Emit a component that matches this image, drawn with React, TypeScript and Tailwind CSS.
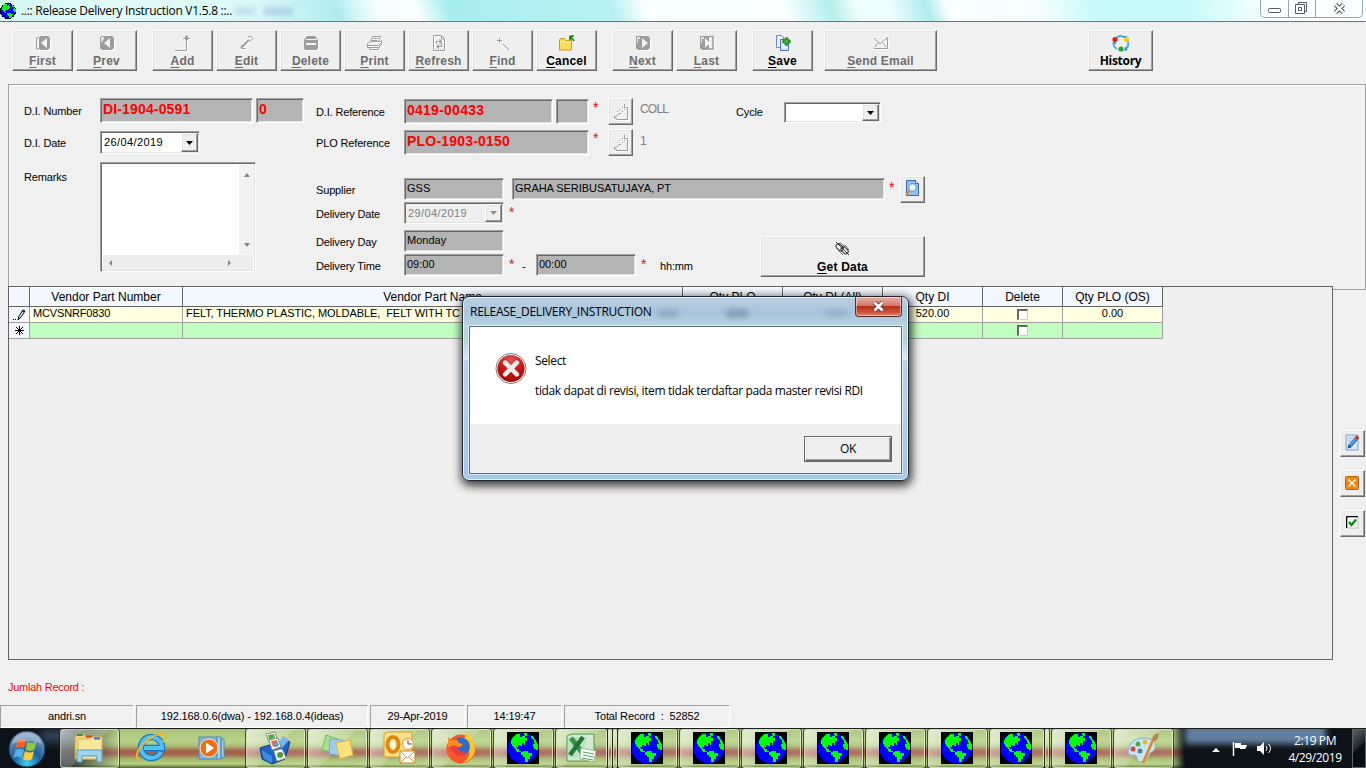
import React from "react";

type Kids = { children?: React.ReactNode };

const BEVEL =
  "border border-t-white border-l-white border-r-[#696969] border-b-[#696969] shadow-[inset_-1px_-1px_0_#a0a0a0,inset_1px_1px_0_#e3e3e3] bg-[#efefef]";
const SUNKEN =
  "border border-t-[#a0a0a0] border-l-[#a0a0a0] border-r-white border-b-white shadow-[inset_1px_1px_0_#696969,inset_-1px_-1px_0_#e3e3e3]";

function Globe({ size, square }: { size: number; square?: boolean }) {
  return (
    <svg width={size} height={size} viewBox="0 0 32 32" shapeRendering="crispEdges" className="shrink-0">
      {square && <rect width="32" height="32" fill="#000" />}
      {!square && <circle cx="16" cy="16" r="16" fill="#000" />}
      <circle cx="16" cy="16" r={square ? 15.3 : 14} fill="#0000ff" />
      <g fill="#00ff00">
        <path d="M4 9L6 5L10 2H13V5H15V4H18V6H20V9H18V13H17V11H15V14H13V13H11V15H9L10 17H12V19H14V20H10L8 16L5 14Z" />
        <path d="M17 1H20V4H18V3H17Z" />
        <path d="M14 20H16V19H21V21H25V24H23V27H21V30H18V25H16V23H14Z" />
        <path d="M24 4H26L29 9H27L25 7Z" />
        <path d="M27 9H29L31 13V18H29V17H27V15H26V12H28V11H27Z" />
      </g>
    </svg>
  );
}

const EMBOSS = "[filter:drop-shadow(1px_1px_0_#fff)]";

function ToolIcon({ name }: { name: string }) {
  switch (name) {
    case "First":
      return (
        <svg width="16" height="16" viewBox="0 0 16 16" className={EMBOSS}>
          <path d="M1.500 3v11h3V2.500z" fill="#f3f3f3" stroke="#9c9c9c" />
          <path d="M5 1h8l2 2v10l-2 2H5z" fill="#9c9c9c" />
          <path d="M12 3v10L6 8z" fill="#f3f3f3" />
        </svg>
      );
    case "Prev":
      return (
        <svg width="16" height="16" viewBox="0 0 16 16" className={EMBOSS}>
          <path d="M2 1h11l2 2v10l-2 2H3l-2-2V3z" fill="#9c9c9c" />
          <path d="M11 3v10L5 8z" fill="#f3f3f3" />
          <path d="M2 2h3v2L2 8z" fill="#e8e8e8" />
        </svg>
      );
    case "Next":
      return (
        <svg width="16" height="16" viewBox="0 0 16 16" className={EMBOSS}>
          <path d="M1 1h12l2 2v10l-2 2H3l-2-2z" fill="#9c9c9c" />
          <path d="M7 3v10l6-5z" fill="#f3f3f3" />
          <path d="M2 2h3v2H3v4H2z" fill="#e4e4e4" />
        </svg>
      );
    case "Last":
      return (
        <svg width="16" height="16" viewBox="0 0 16 16" className={EMBOSS}>
          <path d="M1 1h9v14H3l-2-2z" fill="#9c9c9c" />
          <path d="M6 3v10l5-5z" fill="#f3f3f3" />
          <path d="M10 1.500h4v12.500H10" fill="none" stroke="#9c9c9c" strokeWidth="1.500" />
          <path d="M2 2h3v2H3v4H2z" fill="#e4e4e4" />
        </svg>
      );
    case "Add":
      return (
        <svg width="16" height="16" viewBox="0 0 16 16" className={EMBOSS}>
          <path d="M0 15.500h11.500V6M10.500 1.500h2v3h-2zM8 3.500h7" fill="none" stroke="#9c9c9c" />
          <path d="M11.500 0v6" stroke="#9c9c9c" />
        </svg>
      );
    case "Edit":
      return (
        <svg width="16" height="16" viewBox="0 0 16 16" className={EMBOSS}>
          <path d="M2 13l8-8" fill="none" stroke="#9c9c9c" strokeWidth="1.800" />
          <path d="M9 1.500h3l2 2-3 3M2.500 10v3.500h4" fill="none" stroke="#9c9c9c" />
        </svg>
      );
    case "Delete":
      return (
        <svg width="16" height="16" viewBox="0 0 16 16" className={EMBOSS}>
          <path d="M4 1h8l3 4v8l-1 2H2l-1-2V5z" fill="#9c9c9c" />
          <path d="M3 4.500h11" stroke="#f3f3f3" strokeWidth="1" />
          <path d="M3 9h10" stroke="#f3f3f3" strokeWidth="2" />
        </svg>
      );
    case "Print":
      return (
        <svg width="17" height="16" viewBox="0 0 17 16" className={EMBOSS} fill="none" stroke="#9c9c9c">
          <path d="M4.500 6.500l2-5h8l-2 5M7 3.500h5M6 5.500h5" />
          <path d="M1.500 8.500l3-2h9l2-1v4l-3 3h-11zM1.500 10.500h11l3-3M3 12.500l1 2h8l2-3" />
        </svg>
      );
    case "Refresh":
      return (
        <svg width="16" height="16" viewBox="0 0 16 16" className={EMBOSS} fill="none" stroke="#9c9c9c">
          <path d="M2.500 .5h8l3 3v12h-11zM10.500 1v3h3" />
          <path d="M5.500 9V6.500h4M8.500 4.500l2 2-2 2M10.500 8v3.500H7M8 9.500l-2 2 2 2" strokeWidth="1.200" />
        </svg>
      );
    case "Find":
      return (
        <svg width="16" height="16" viewBox="0 0 16 16" className={EMBOSS} fill="none" stroke="#9c9c9c">
          <path d="M4.500 3v5M2 5.500h5M8 9l6 6" />
        </svg>
      );
    case "Cancel":
      return (
        <svg width="17" height="16" viewBox="0 0 17 16">
          <path d="M1.500 5l1-1.500h4l1 2h6v9.500h-12z" fill="#ffdc58" stroke="#c79a18" />
          <path d="M2 7h11" stroke="#fff3a8" />
          <path d="M12 1h4M12 1v4M12 1l4 5" stroke="#0a8a12" strokeWidth="1.700" />
        </svg>
      );
    case "Save":
      return (
        <svg width="16" height="16" viewBox="0 0 16 16">
          <path d="M1.500 .5h5l2 2v10h-7z" fill="#e9f3ff" stroke="#6c84c8" />
          <path d="M5.500 4.500h8v11h-8z" fill="#cfe5ff" stroke="#5472bc" />
          <path d="M7 10h5M7 12.500h5" stroke="#fff" />
          <path d="M11.500 2.500v8M7.500 6.500h8" stroke="#187818" strokeWidth="3.600" />
          <path d="M11.500 3.500v6M8.500 6.500h6" stroke="#49b23e" strokeWidth="2" />
        </svg>
      );
    case "Send Email":
      return (
        <svg width="16" height="16" viewBox="0 0 16 16" className={EMBOSS} fill="none" stroke="#9c9c9c">
          <path d="M1 3l6 6 7.500-6.500v11H1M2 12l3-4M10 8l3 4" />
        </svg>
      );
    default:
      return (
        <svg width="18" height="17" viewBox="0 0 18 17" fill="none">
          <path d="M4 3Q9-1 13 3M15.500 6Q18 11 13 14M5 14Q1 12 1.500 7" stroke="#4ba9e4" strokeWidth="1.800" />
          <path d="M11 1h4v3zM1 9h4l-3-3zM12 16l1-4 3 3z" fill="#3293d8" />
          <circle cx="3" cy="4.500" r="2.600" fill="#ec1c14" />
          <circle cx="14.500" cy="4.500" r="2.600" fill="#f4d10c" />
          <circle cx="9" cy="14" r="2.600" fill="#35a12b" />
        </svg>
      );
  }
}

function ToolButton({ label, on, className = "w-[61px]" }: { label: string; on?: boolean; className?: string }) {
  return (
    <button
      className={`flex h-[41px] shrink-0 flex-col items-center ${BEVEL} ${className} ${on ? "text-black" : "text-[#6d6d6d]"}`}
    >
      <span className="mt-[4px] flex h-[17px] items-start">
        <ToolIcon name={label} />
      </span>
      <span className="mt-[2px] text-[12px] font-bold leading-[14px] tracking-[0.2px]">
        {label === "History" ? (
          <span className="font-['Open_Sans'] tracking-[-0.3px]">{label}</span>
        ) : (
          <>
            <span className="underline underline-offset-2">{label[0]}</span>
            {label.slice(1)}
          </>
        )}
      </span>
    </button>
  );
}

function Field({ className = "", children }: Kids & { className?: string }) {
  return <div className={`shrink-0 overflow-hidden whitespace-pre bg-[#b4b4b4] pl-[2px] ${SUNKEN} ${className}`}>{children}</div>;
}

function Combo({ value, className = "", off }: { value: string; className?: string; off?: boolean }) {
  return (
    <div className={`flex shrink-0 p-px ${SUNKEN} ${off ? "bg-[#efefef] text-[#808080]" : "bg-white"} ${className}`}>
      <span className="flex-1 pl-[2px] leading-[19px] tracking-[0.4px]">{value}</span>
      <span className={`flex w-[17px] items-center justify-center ${BEVEL}`}>
        <svg width="7" height="4" viewBox="0 0 7 4">
          <path d="M0 0h7L3.500 4z" fill={off ? "#909090" : "#000"} />
        </svg>
      </span>
    </div>
  );
}

function Star({ className = "" }: { className?: string }) {
  return (
    <span className={`w-[6px] shrink-0 text-[14px] leading-[16px] text-[#ff0000] ${className}`}>*</span>
  );
}

function LookupOff() {
  return (
    <div className={`flex h-[27px] w-[25px] shrink-0 items-center justify-center ${BEVEL}`}>
      <svg width="16" height="18" viewBox="0 0 16 18" fill="none" stroke="#9c9c9c" className={EMBOSS}>
        <path d="M11.500 1v3.500h3v12h-11M1 15l5-4M1 13l1 2 2 1M6 10.500h2" />
        <path d="M9 4.500h1M6 6.500h1M4 8.500h1M9 8.500h1M11 6.500h1" />
      </svg>
    </div>
  );
}

function Label({ children, className = "" }: Kids & { className?: string }) {
  return <span className={`shrink-0 whitespace-nowrap leading-[14px] tracking-[-0.15px] ${className}`}>{children}</span>;
}

function FormPanel() {
  return (
    <section className="ml-2 flex h-[206px] shrink-0 border border-r-[#a0a0a0] border-[#a0a0a0] shadow-[inset_1px_1px_0_#fff]">
      <div className="flex w-[307px] shrink-0 flex-col pl-[15px] pt-[13px]">
        <div className="flex h-[33px]">
          <Label className="w-[76px] pt-[6px]">D.I. Number</Label>
          <Field className="h-[25px] w-[153px] text-[14px] font-bold leading-[21px] tracking-[0.15px] text-[#ff0000]">DI-1904-0591</Field>
          <Field className="ml-[3px] h-[25px] w-[48px] text-[14px] font-bold leading-[21px] text-[#ff0000]">0</Field>
        </div>
        <div className="flex h-[31px]">
          <Label className="w-[76px] pt-[5px]">D.I. Date</Label>
          <Combo value="26/04/2019" className="h-[23px] w-[100px]" />
        </div>
        <div className="flex">
          <Label className="w-[76px] pt-[8px]">Remarks</Label>
          <div className={`flex h-[110px] w-[156px] flex-col bg-white p-px ${SUNKEN}`}>
            <div className="flex h-[91px]">
              <div className="flex-1" />
              <div className="mt-px flex w-[15px] flex-col items-center justify-between bg-[#f2f2f2] py-[7px]">
                <svg width="8" height="5"><path d="M1 5h6L4 1z" fill="#858585" /></svg>
                <svg width="8" height="5"><path d="M1 0h6L4 4z" fill="#858585" /></svg>
              </div>
            </div>
            <div className="mx-px flex flex-1 items-center justify-between bg-[#ededed] pl-[5px] pr-[21px]">
              <svg width="5" height="8"><path d="M4 1v6L1 4z" fill="#858585" /></svg>
              <svg width="5" height="8"><path d="M1 1v6l3-3z" fill="#858585" /></svg>
            </div>
          </div>
        </div>
      </div>

      <div className="flex flex-1 flex-col pt-[13px]">
        <div className="flex h-[31px]">
          <Label className="w-[88px] pt-[7px]">D.I. Reference</Label>
          <Field className="mt-px h-[25px] w-[149px] text-[14px] font-bold leading-[21px] tracking-[0.25px] text-[#ff0000]">0419-00433</Field>
          <Field className="ml-[3px] mt-px h-[25px] w-[33px]" />
          <Star className="ml-[4px] mt-px" />
          <div className="ml-[9px]"><LookupOff /></div>
          <span className="ml-[7px] w-[96px] pt-[3px] text-[12px] leading-[16px] tracking-[-0.8px] text-[#808080]">COLL</span>
          <Label className="w-[48px] pt-[7px]">Cycle</Label>
          <Combo value="" className="mt-[4px] h-[21px] w-[97px]" />
        </div>
        <div className="flex h-[47px]">
          <Label className="w-[88px] pt-[7px]">PLO Reference</Label>
          <Field className="mt-px h-[25px] w-[185px] text-[14px] font-bold leading-[21px] tracking-[0.2px] text-[#ff0000]">PLO-1903-0150</Field>
          <Star className="ml-[4px] mt-px" />
          <div className="ml-[9px]"><LookupOff /></div>
          <span className="ml-[7px] pt-[4px] text-[12px] leading-[16px] text-[#808080]">1</span>
        </div>
        <div className="flex h-[26px]">
          <Label className="w-[88px] pt-[7px]">Supplier</Label>
          <Field className="mt-[2px] h-[22px] w-[100px] leading-[18px]">GSS</Field>
          <Field className="ml-[8px] mt-[2px] h-[22px] w-[373px] leading-[18px] tracking-[-0.05px]">GRAHA SERIBUSATUJAYA, PT</Field>
          <Star className="ml-[4px] mt-[3px]" />
          <div className={`ml-[5px] flex h-[27px] w-[25px] shrink-0 items-center justify-center ${BEVEL}`}>
            <svg width="15" height="17" viewBox="0 0 15 17" className="-mt-[2px]">
              <path d="M1.500 .5h9l3 3v12h-12z" fill="#8fc3f4" stroke="#3568b8" />
              <path d="M10.500 .5v3h3" fill="#fff" stroke="#3568b8" />
              <circle cx="7.500" cy="7.500" r="3.800" fill="#e6f4ff" stroke="#8094b4" strokeWidth="1.200" />
              <path d="M4.500 10.500L1 15" stroke="#e18a2c" strokeWidth="2" />
            </svg>
          </div>
        </div>
        <div className="flex h-[28px]">
          <Label className="w-[88px] pt-[5px]">Delivery Date</Label>
          <Combo value="29/04/2019" off className="h-[22px] w-[100px]" />
          <Star className="ml-[5px] mt-[2px]" />
        </div>
        <div className="flex">
          <div className="flex w-[444px] flex-col">
            <div className="flex h-[24px]">
              <Label className="w-[88px] pt-[5px]">Delivery Day</Label>
              <Field className="h-[22px] w-[100px] leading-[18px]">Monday</Field>
            </div>
            <div className="flex h-[24px]">
              <Label className="w-[88px] pt-[5px]">Delivery Time</Label>
              <Field className="h-[22px] w-[100px] leading-[18px]">09:00</Field>
              <Star className="ml-[5px] mt-[2px]" />
              <span className="ml-[7px] w-[14px] pt-[5px] leading-[14px]">-</span>
              <Field className="h-[22px] w-[100px] leading-[18px]">00:00</Field>
              <Star className="ml-[5px] mt-[2px]" />
              <Label className="ml-[13px] pt-[5px]">hh:mm</Label>
            </div>
          </div>
          <button className={`mt-[6px] flex h-[41px] w-[165px] flex-col items-center ${BEVEL}`}>
            <svg width="16" height="16" viewBox="0 0 16 16" className="mt-[4px]" fill="none" stroke="#333">
              <path d="M1 1l13 13" />
              <rect x="1" y="4" width="8" height="5" rx="2.500" transform="rotate(45 5 6)" />
              <rect x="6" y="7" width="8" height="5" rx="2.500" transform="rotate(45 10 9)" />
              <path d="M5 1.500l6 5M10 4l4 5M3 9l5 5" stroke="#777" />
            </svg>
            <span className="mt-[3px] text-[12px] font-bold leading-[14px] tracking-[0.2px]">
              <span className="underline underline-offset-2">G</span>et Data
            </span>
          </button>
        </div>
      </div>
    </section>
  );
}

const COLS = "grid grid-cols-[21px_153px_500px_100px_100px_100px_80px_100px] w-[1154px]";
const HEADS = ["", "Vendor Part Number", "Vendor Part Name", "Qty PLO", "Qty DI (All)", "Qty DI", "Delete", "Qty PLO (OS)"];

function Check() {
  return <span className="block h-[11px] w-[11px] border-2 border-b border-r border-[#6a6a6a] border-b-[#ccc] border-r-[#ccc] bg-white" />;
}

function DataGrid() {
  const cell = "flex items-center justify-center whitespace-pre border-b border-r border-[#a0a0a0] leading-[13px]";
  return (
    <section className="-mt-[4px] ml-2 h-[374px] w-[1325px] shrink-0 border border-[#646464] bg-[#efefef]">
      <div className={`${COLS} h-[20px] text-[12px]`}>
        {HEADS.map((h, i) => (
          <div key={i} className="flex items-center justify-center border-b border-r border-[#646464] bg-[#f3f7fe] shadow-[inset_1px_1px_0_#fff]">{h}</div>
        ))}
      </div>
      <div className={`${COLS} h-[16px]`}>
        <div className={`${cell} border-[#646464] bg-[#f3f7fe]`}>
          <svg width="13" height="12" viewBox="0 0 13 12" fill="none" stroke="#000"><path d="M0 10.500h1M2 10.500h1M5 11l1-4 4-6 2 1-4 6zM9 2l2 1" /></svg>
        </div>
        <div className={`${cell} justify-start bg-[#ffffe1] pb-[2px] pl-[3px] tracking-[-0.15px]`}>MCVSNRF0830</div>
        <div className={`${cell} justify-start bg-[#ffffe1] pb-[2px] pl-[3px] tracking-[-0.07px]`}>FELT, THERMO PLASTIC, MOLDABLE,  FELT WITH TC</div>
        <div className={`${cell} bg-[#ffffe1]`} />
        <div className={`${cell} bg-[#ffffe1]`} />
        <div className={`${cell} bg-[#ffffe1] pb-[2px]`}>520.00</div>
        <div className={`${cell} bg-[#ffffe1]`}><Check /></div>
        <div className={`${cell} bg-[#ffffe1] pb-[2px]`}>0.00</div>
      </div>
      <div className={`${COLS} h-[16px]`}>
        <div className={`${cell} border-[#646464] bg-[#f3f7fe]`}>
          <svg width="9" height="9" viewBox="0 0 9 9" stroke="#000"><path d="M4.500 0v9M0 4.500h9M1 1l7 7M8 1L1 8" /></svg>
        </div>
        {[0, 1, 2, 3, 4, 5, 6].map((i) => (
          <div key={i} className={`${cell} bg-[#c0ffc0]`}>{i === 5 && <Check />}</div>
        ))}
      </div>
    </section>
  );
}

function SideTools() {
  const b = `flex h-[27px] w-[25px] items-center justify-center ${BEVEL}`;
  return (
    <div className="ml-[7px] mt-[140px] flex flex-col gap-[13px]">
      <div className={b}>
        <svg width="15" height="17" viewBox="0 0 15 17" className="-mt-[2px]">
          <path d="M1 1h12v15H1z" fill="#d7e8fb" stroke="#7f9cd4" />
          <path d="M3 4h7M3 7h5" stroke="#a0b6cf" />
          <path d="M4 13L11.500 4.500" stroke="#275d9e" strokeWidth="3.600" />
          <path d="M5 11.500L11 4.500" stroke="#5ba2ec" strokeWidth="2" />
          <path d="M11 4.800L13 2.500" stroke="#d8301c" strokeWidth="3.600" />
          <path d="M2.500 14.500l2.500-1-1.500-1.500z" fill="#333" />
        </svg>
      </div>
      <div className={b}>
        <svg width="14" height="14" viewBox="0 0 14 14" className="-ml-px -mt-[2px]">
          <rect x=".5" y=".5" width="13" height="13" rx="1" fill="#f48717" stroke="#b3610d" />
          <path d="M3.500 3.500l7 7M10.500 3.500l-7 7" stroke="#fff" strokeWidth="1.300" />
        </svg>
      </div>
      <div className={b}>
        <svg width="13" height="13" viewBox="0 0 13 13" className="-ml-px -mt-[2px]">
          <path d="M1 12V1h11" fill="#fff" stroke="#000" />
          <path d="M1.500 1.500h10v10h-10z" fill="#f6f6f6" />
          <path d="M.5 12V.5H12" fill="none" stroke="#000" />
          <path d="M12 1v11H1" fill="none" stroke="#c4c4c4" />
          <path d="M3 6l2.500 3L10 3.500" fill="none" stroke="#078a07" strokeWidth="2.200" />
        </svg>
      </div>
    </div>
  );
}

function StatusCell({ children, className }: Kids & { className: string }) {
  return (
    <div className={`flex h-[23px] shrink-0 items-center justify-center whitespace-pre border border-[#a0a0a0] border-b-white border-r-white tracking-[-0.12px] ${className}`}>
      {children}
    </div>
  );
}

function Dialog() {
  return (
    <div className="absolute left-[462px] top-[296px] flex h-[185px] w-[447px] flex-col rounded-[7px] border border-[#20262c] bg-[linear-gradient(180deg,#bccfe2_0px,#a9c5dc_16px,#b9d6e0_30px,#abd6da_42px,#c9dff4_55px,#dce9f8_62px,#b7d2ee_64px,#a4c8ea_100%)] px-[6px] pb-[6px] font-['Open_Sans'] text-[12px] shadow-[inset_0_0_0_1px_#e6f1fa,1px_3px_10px_2px_rgba(0,0,0,0.75)]">
      <div className="flex h-[29px] shrink-0 items-start">
        <span className="ml-[1px] mt-[6px] w-[182px] whitespace-nowrap leading-[17px] tracking-[-0.26px]">RELEASE_DELIVERY_INSTRUCTION</span>
        <div className="ml-[6px] mt-[13px] flex w-[190px]">
          <span className="h-[7px] w-[20px] bg-[#5b7890] opacity-40 blur-[3px]" />
          <span className="ml-[48px] h-[7px] w-[22px] bg-[#5b7890] opacity-60 blur-[3px]" />
          <span className="ml-[77px] h-[7px] w-[22px] bg-[#5b7890] opacity-30 blur-[3px]" />
        </div>
        <div className="absolute right-[6px] top-0 flex h-[20px] w-[47px] items-center justify-center rounded-b-[4px] border border-t-0 border-[#5c2a28] bg-[linear-gradient(180deg,#e8b0a4_0%,#d2796c_45%,#b7301c_50%,#c9503a_80%,#e08e72_100%)] shadow-[inset_0_0_0_1px_rgba(255,255,255,0.45)]">
          <svg width="13" height="11" viewBox="0 0 13 11">
            <path d="M2.500 1.500l8 8M10.500 1.500l-8 8" stroke="#564448" strokeWidth="4.500" />
            <path d="M2.500 1.500l8 8M10.500 1.500l-8 8" stroke="#fff" strokeWidth="2.600" />
          </svg>
        </div>
      </div>
      <div className="flex flex-1 flex-col border border-[#5d6b76] bg-[#efefef] shadow-[0_0_0_1px_rgba(235,246,253,0.7)]">
        <div className="flex h-[97px] bg-white pl-[25px] pt-[25px]">
          <svg width="32" height="33" viewBox="0 0 33 33" className="shrink-0">
            <defs>
              <radialGradient id="err" cx="50%" cy="20%" r="85%">
                <stop offset="0" stopColor="#dd5555" />
                <stop offset=".55" stopColor="#c41414" />
                <stop offset="1" stopColor="#a00505" />
              </radialGradient>
            </defs>
            <circle cx="16.500" cy="16.500" r="15.500" fill="#fff" stroke="#777" />
            <circle cx="16.500" cy="16.500" r="14" fill="url(#err)" />
            <path d="M10.500 10.500l12 12M22.500 10.500l-12 12" stroke="#ececec" strokeWidth="4.800" strokeLinecap="round" />
          </svg>
          <div className="ml-[8px] mt-px flex flex-col whitespace-nowrap leading-[15px]">
            <span className="tracking-[-0.35px]">Select</span>
            <span className="mt-[15px] tracking-[-0.38px]">tidak dapat di revisi, item tidak terdaftar pada master revisi RDI</span>
          </div>
        </div>
        <div className="flex flex-1 justify-end pr-[9px] pt-[12px]">
          <div className="h-[26px] w-[88px] border border-[#646464]">
            <div className={`flex h-full w-full items-center justify-center tracking-[-0.4px] ${BEVEL}`}>OK</div>
          </div>
        </div>
      </div>
    </div>
  );
}

function Task({ children, className = "w-[59px]", plain }: Kids & { className?: string; plain?: boolean }) {
  return (
    <div
      className={`flex h-[39px] shrink-0 items-center justify-center pb-[2px] pr-[2px] ${className} ${
        plain ? "" : "rounded-[3px] border border-[#dfe8cf]/70 bg-[linear-gradient(135deg,rgba(255,255,255,0.65)_0%,rgba(255,255,255,0.25)_48%,rgba(255,255,255,0.08)_52%,rgba(255,255,255,0.15)_100%)] shadow-[0_0_0_1px_rgba(20,30,10,0.7)]"
      }`}
    >
      {children}
    </div>
  );
}

function Taskbar() {
  return (
    <footer className="relative flex h-[40px] shrink-0 overflow-hidden border-t border-[#1a1d1a] bg-[#0c1217] text-white">
      <div className="absolute inset-y-0 left-[60px] w-[1125px] bg-[linear-gradient(180deg,#a9c17a_0px,#b8d488_12px,#a9bd72_17px,#a5604c_22px,#a5604c_25px,#a3b669_30px,#b4d37e_35px,#4f6034_39px)] [mask-image:linear-gradient(90deg,transparent_0px,#000_60px,#000_1112px,transparent_1125px)]" />
      <div className="absolute left-[40px] top-0 h-[14px] w-[35px] bg-[#46617f] opacity-60 blur-[4px]" />
      <div className="absolute left-[1185px] top-[-4px] h-[19px] w-[141px] bg-[#6d8db0] opacity-90 blur-[3px]" />
      <div className="relative flex w-full">
        <div className="flex w-[60px] shrink-0 items-center pl-[8px]">
          <svg width="38" height="38" viewBox="0 0 38 38">
            <defs>
              <radialGradient id="orb" cx="50%" cy="90%" r="85%">
                <stop offset="0" stopColor="#3fd0f4" />
                <stop offset=".45" stopColor="#1d5f9f" />
                <stop offset="1" stopColor="#7f9fbc" />
              </radialGradient>
            </defs>
            <circle cx="19" cy="19" r="18" fill="url(#orb)" stroke="#14324f" />
            <path d="M9.500 10.500q4.500-3 8.500 0l-2 8q-4-3-8.500 0z" fill="#f0642c" />
            <path d="M19.500 11.500q4.500 3 9 0l-2 8q-4.500 3-9 0z" fill="#90c73e" />
            <path d="M7.500 20q4.500-3 8.500 0l-2 8q-4-3-8.500 0z" fill="#5aaee8" />
            <path d="M17 21q4.500 3 9 0l-2 8q-4.500 3-9 0z" fill="#fccc38" />
            <path d="M4 14Q7 3 19 3T34 14Q19 8 4 14" fill="#fff" opacity=".3" />
          </svg>
        </div>
        <Task>
          <svg width="34" height="32" viewBox="0 0 34 32">
            <path d="M3 5l2-3h7l2 3h14v22H3z" fill="#f3d67c" stroke="#c79e3c" />
            <path d="M6 7h11l2-2h11v22H6z" fill="#fbe69b" stroke="#d4ae50" />
            <path d="M5 3h6" stroke="#2d9b3d" strokeWidth="2" />
            <path d="M14 4.500h6" stroke="#d8401c" strokeWidth="2" />
            <path d="M22 6.500h6" stroke="#2b6cc8" strokeWidth="2" />
            <path d="M5 30V18h25v12h-5v-6H10v6z" fill="#9fd4f0" stroke="#4a98c8" />
          </svg>
        </Task>
        <Task plain className="w-[65px]">
          <svg width="32" height="32" viewBox="0 0 32 32" fill="none">
            <path d="M26 20A10.500 10.500 0 1 1 27 16H9" stroke="#167dc4" strokeWidth="6.500" />
            <path d="M26 20A10.500 10.500 0 1 1 27 16H9" stroke="#4fc2f2" strokeWidth="4" />
            <path d="M4 28Q-2 24 8 12Q23-2 29 3Q31 5 28 10" stroke="#f0b42c" strokeWidth="2" />
          </svg>
        </Task>
        <Task plain className="w-[62px] pr-[6px]">
          <svg width="30" height="28" viewBox="0 0 30 28">
            <path d="M2 3h18v22H2z" fill="#7db8dc" stroke="#4c8bb5" />
            <path d="M20 3h4v22h-4zM24 5h3v19h-3z" fill="#a5d2ec" stroke="#4c8bb5" />
            <circle cx="12" cy="14" r="9" fill="#f06d14" stroke="#fbe2cc" />
            <path d="M9 8.500v11l8-5.500z" fill="#fff" />
          </svg>
        </Task>
        <Task>
          <svg width="36" height="34" viewBox="0 0 36 34">
            <path d="M3 17l9-3 7 4 8-10 6 3-5 17-13 5-10-5z" fill="#1d63c4" stroke="#0e3e86" />
            <path d="M26 5l6 4-7 8-4-4z" fill="#74b6f4" />
            <path d="M9 3l9-2 2 7-8 3z" fill="#fff" stroke="#888" />
            <path d="M11 4l6-1 1 4-6 2z" fill="#4aae42" />
            <path d="M12 9l9-2 3 9-9 3z" fill="#fff" stroke="#888" />
            <path d="M14 10l6-1 2 6-6 1z" fill="#f06a42" />
            <path d="M17 12l4-1 1 4-4 1z" fill="#38a9d8" />
            <path d="M17 20l8-2 4 9-9 3z" fill="#fff" stroke="#aaa" />
            <circle cx="23" cy="24" r="3" fill="#35b044" />
            <path d="M23 24l3-1-2-2z" fill="#e8382c" />
            <path d="M4 19l11 6v7L7 28z" fill="#3d8ae4" />
          </svg>
        </Task>
        <Task className="ml-[3px] w-[59px]">
          <svg width="34" height="30" viewBox="0 0 34 30">
            <path d="M6 2l12 4-4 14-12-3z" fill="#a8e08c" stroke="#7bb867" />
            <path d="M10 6l13 1-1 16-13-2z" fill="#9fcbf2" stroke="#7aa8d0" />
            <path d="M16 10l14-3 3 15-13 4z" fill="#fce27c" stroke="#d6b648" />
          </svg>
        </Task>
        <Task className="ml-[3px] w-[59px]">
          <svg width="34" height="33" viewBox="0 0 34 33">
            <path d="M2 3l4-2h24v25H2z" fill="#fcdf8c" stroke="#d99b22" />
            <ellipse cx="11" cy="13.500" rx="5.500" ry="7.500" fill="#fff3cf" stroke="#e08a08" strokeWidth="4" />
            <circle cx="26" cy="13" r="5.500" fill="#fffaf0" stroke="#de9a30" />
            <path d="M26 9v4h4" stroke="#555" fill="none" />
            <path d="M18 20h15v12H18z" fill="#fff" stroke="#c08a2c" />
            <path d="M18 20l7.500 7 7.500-7M18 32l6-6M33 32l-6-6" stroke="#d09a3a" fill="none" />
          </svg>
        </Task>
        <Task className="ml-[3px] w-[59px]">
          <svg width="32" height="32" viewBox="0 0 32 32">
            <circle cx="16" cy="17" r="14.500" fill="#f7582a" />
            <path d="M22 1q9 6 8 18-2 9-12 12 8-6 6-14-1-7-5-9 1-5 3-7z" fill="#ffc52e" />
            <circle cx="16" cy="14.500" r="9" fill="#2a6fd0" />
            <path d="M3 5l3 4q3-2 6-1l2 3 4 1q-1 3-5 3 0 6 8 5-3 5-9 3-7-3-7-10z" fill="#ee3e3c" />
            <path d="M3 5l3 4q3-2 6-1l2 3 4 1q-1 3-5 3-5-4-10 1z" fill="#ff8a1f" />
          </svg>
        </Task>
        <Task className="ml-[3px] w-[59px]"><Globe size={32} square /></Task>
        <Task className="ml-[3px] w-[51px]">
          <svg width="32" height="30" viewBox="0 0 32 30">
            <path d="M2 3l5-2h22v27H2z" fill="#d3ead2" stroke="#4c9a54" />
            <path d="M3 4h18l-2 20H3z" fill="#bfe0be" />
            <path d="M6 5l13 17" stroke="#2f9442" strokeWidth="5" />
            <path d="M18 4L5 22" stroke="#1d7a34" strokeWidth="4.500" />
            <path d="M16 15l15 3-2 11-14-3z" fill="#fff" stroke="#8fbf94" />
            <path d="M18 19l11 2M18 22l11 2M17 25l11 2" stroke="#5c9c64" />
          </svg>
        </Task>
        <Task className="ml-[1px] w-[4px]" />
        <Task className="ml-[1px] w-[4px]" />
        <Task className="ml-[1px] w-[59px]"><Globe size={32} square /></Task>
        <Task className="ml-[3px] w-[59px]"><Globe size={32} square /></Task>
        <Task className="ml-[3px] w-[59px]"><Globe size={32} square /></Task>
        <Task className="ml-[3px] w-[59px]"><Globe size={32} square /></Task>
        <Task className="ml-[3px] w-[59px]"><Globe size={32} square /></Task>
        <Task className="ml-[3px] w-[59px]"><Globe size={32} square /></Task>
        <Task className="ml-[3px] w-[54px]"><Globe size={32} square /></Task>
        <Task className="ml-[1px] w-[4px]" />
        <Task className="ml-[3px] w-[59px]"><Globe size={32} square /></Task>
        <Task className="ml-[3px] w-[59px]">
          <svg width="34" height="32" viewBox="0 0 34 32">
            <path d="M2 19Q4 6 18 6t11 10q-1 4-5 5-2 8-10 9-3 0-3-4 0-3-4-3-5 1-5-4z" fill="#c8e6f6" stroke="#7db4d2" />
            <circle cx="7" cy="17" r="2.500" fill="#dd4433" />
            <circle cx="12" cy="12" r="2.500" fill="#4dab45" />
            <circle cx="19" cy="10" r="2.500" fill="#f0b62c" />
            <circle cx="14" cy="19" r="2.500" fill="#547e94" />
            <path d="M17 31L27 8" stroke="#e7862c" strokeWidth="2.800" />
            <path d="M26 8q0-6 7-7-1 7-4 8z" fill="#b98550" />
          </svg>
        </Task>
        <div className="ml-auto flex items-center">
          <svg width="60" height="18" viewBox="0 0 60 18" fill="#fff">
            <path d="M0 12h8L4 8z" />
            <path d="M21.500 2v14" stroke="#fff" strokeWidth="1.500" />
            <path d="M23 3h6v2h6q-1 3-2 4h-5V8h-5z" />
            <path d="M45 6h3l4-4v13l-4-4h-3z" />
            <path d="M54 6q2 3 0 5M56.500 4q4 4.500 0 9" fill="none" stroke="#fff" />
          </svg>
          <div className="ml-[9px] mr-px flex w-[68px] flex-col items-center font-['Open_Sans'] text-[12px] leading-[17px] tracking-[-0.4px]">
            <span>2:19 PM</span>
            <span>4/29/2019</span>
          </div>
          <div className="ml-[2px] h-[39px] w-[14px] border border-[#5b6268] bg-[linear-gradient(135deg,#5c6166_0%,#22272b_45%,#0b0e11_50%)]" />
        </div>
      </div>
    </footer>
  );
}

export default function App() {
  return (
    <main className="relative flex h-[768px] w-[1366px] flex-col overflow-hidden bg-[#f0f0f0] font-['Liberation_Sans',Arial,sans-serif] text-[11px] text-black">
      <header className="flex h-[22px] shrink-0 items-start border-b border-[#66777a] bg-[linear-gradient(70deg,#d4f5f5_0px,#e2fafa_120px,#dcf8f8_250px,#b0ecec_320px,#d8f8f8_340px,#f6fefe_360px,#fbffff_395px,#a8eeee_425px,#b9f1f1_580px,#f8ffff_610px,#fcffff_740px,#b5eeee_785px,#effdfd_810px,#f0fdfd_840px,#b0ecec_875px,#fafefe_895px,#f6ffff_980px,#c9fafa_1030px,#c8f9f9_1120px,#eefefe_1180px,#ffffff_1250px,#d8fbfb_1366px)]">
        <span className="mt-[3px]"><Globe size={16} /></span>
        <span className="ml-[5px] mt-[2px] w-[214px] whitespace-nowrap font-['Open_Sans'] text-[12px] leading-[18px] tracking-[-0.28px]">
          ..:: Release Delivery Instruction V1.5.8 ::..
        </span>
        <div className="mt-[8px] flex gap-[8px] opacity-50">
          <span className="h-[6px] w-[20px] bg-[#8fb6dc] blur-[3px]" />
          <span className="h-[7px] w-[30px] bg-[#7aa5d6] blur-[3px]" />
        </div>
        <div className="ml-auto mr-[3px] flex h-[18px] w-[103px] rounded-b-[5px] border border-t-0 border-[#8fa8a9] bg-white/50">
          <div className="flex w-[28px] items-center justify-center border-r border-[#8fa8a9] pt-[3px]">
            <svg width="13" height="5"><rect x=".5" y=".5" width="12" height="4" rx="1" fill="#fff" stroke="#50586c" /></svg>
          </div>
          <div className="flex w-[27px] items-center justify-center border-r border-[#8fa8a9] pb-px pr-[2px]">
            <svg width="13" height="13" viewBox="0 0 13 13" fill="#fff" stroke="#50586c"><path d="M3.500 .5h8v9h-8z" /><path d="M.5 2.500h9v9h-9zM3.500 5.500h3v3h-3z" /></svg>
          </div>
          <div className="flex flex-1 items-center justify-center pb-px">
            <svg width="13" height="11" viewBox="0 0 13 11"><path d="M2.500 1.500l8 8M10.500 1.500l-8 8" stroke="#50586c" strokeWidth="4.500" /><path d="M2.500 1.500l8 8M10.500 1.500l-8 8" stroke="#fff" strokeWidth="2.400" /></svg>
          </div>
        </div>
      </header>

      <nav className="flex h-[62px] shrink-0 items-start gap-[3px] pl-[12px] pt-[8px]">
        <ToolButton label="First" />
        <ToolButton label="Prev" />
        <ToolButton label="Add" className="ml-[12px] w-[61px]" />
        <ToolButton label="Edit" />
        <ToolButton label="Delete" />
        <ToolButton label="Print" />
        <ToolButton label="Refresh" />
        <ToolButton label="Find" />
        <ToolButton label="Cancel" on />
        <ToolButton label="Next" className="ml-[12px] w-[61px]" />
        <ToolButton label="Last" />
        <ToolButton label="Save" on className="ml-[12px] w-[61px]" />
        <ToolButton label="Send Email" className="ml-[8px] w-[113px]" />
        <ToolButton label="History" on className="ml-[148px] w-[65px]" />
      </nav>

      <FormPanel />

      <div className="flex h-[370px] shrink-0 items-start">
        <DataGrid />
        <SideTools />
      </div>

      <div className="flex h-[45px] shrink-0 items-center pl-[8px] pt-[9px] tracking-[-0.25px] text-[#ff0000]">Jumlah Record :</div>

      <div className="flex h-[23px] shrink-0 gap-[2px]">
        <StatusCell className="w-[134px]">andri.sn</StatusCell>
        <StatusCell className="w-[232px]">192.168.0.6(dwa) - 192.168.0.4(ideas)</StatusCell>
        <StatusCell className="w-[95px]">29-Apr-2019</StatusCell>
        <StatusCell className="w-[95px]">14:19:47</StatusCell>
        <StatusCell className="w-[166px]">{"Total Record  :  52852"}</StatusCell>
      </div>

      <Taskbar />
      <Dialog />
    </main>
  );
}
